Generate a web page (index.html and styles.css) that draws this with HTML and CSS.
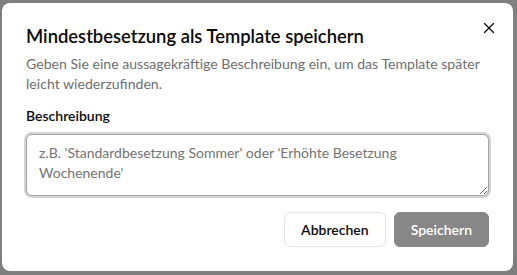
FILE: index.html
```html
<!DOCTYPE html>
<html lang="de">
<head>
    <meta charset="UTF-8">
    <meta name="viewport" content="width=device-width, initial-scale=1.0">
    <title>Template speichern</title>
    <link rel="stylesheet" href="styles.css">
</head>
<body>
    <div class="backdrop">
        <div class="dialog" role="dialog">
            <button class="close-btn" aria-label="Schließen">
                <svg width="16" height="16" viewBox="0 0 16 16" fill="none" stroke="#111" stroke-width="1.4" stroke-linecap="round">
                    <path d="M3.5 3.5l9 9M12.5 3.5l-9 9"/>
                </svg>
            </button>

            <div class="dialog-header">
                <h2>Mindestbesetzung als Template speichern</h2>
                <p>Geben Sie eine aussagekräftige Beschreibung ein, um das Template später leicht wiederzufinden.</p>
            </div>

            <form class="dialog-form">
                <label for="beschreibung">Beschreibung</label>
                <textarea id="beschreibung" rows="2" autofocus placeholder="z.B. 'Standardbesetzung Sommer' oder 'Erhöhte Besetzung Wochenende'"></textarea>

                <div class="dialog-footer">
                    <button type="button" class="btn btn-outline">Abbrechen</button>
                    <button type="submit" class="btn btn-primary" disabled>Speichern</button>
                </div>
            </form>
        </div>
    </div>
</body>
</html>
```

FILE: styles.css
```css
* {
    box-sizing: border-box;
}

body {
    margin: 0;
    font-family: Lato, "Noto Sans", sans-serif;
    background-color: #7f7f7f;
}

.backdrop {
    padding: 3px 4px 4px 2px;
}

.dialog {
    position: relative;
    background-color: #fff;
    border-radius: 8px;
    padding: 19px 24px 24px 24px;
    height: 268px;
}

.close-btn {
    position: absolute;
    top: 17px;
    right: 16px;
    width: 16px;
    height: 16px;
    padding: 0;
    border: none;
    background: none;
    display: flex;
}

.dialog-header h2 {
    margin: 0;
    font-size: 18.4px;
    line-height: 28px;
    font-weight: 600;
    color: #0a0a0a;
}

.dialog-header p {
    margin: 4px 0 0 0;
    font-size: 14.1px;
    line-height: 20px;
    color: #6e6e6e;
}

.dialog-form {
    display: flex;
    flex-direction: column;
    margin-top: 12px;
}

.dialog-form label {
    font-size: 14px;
    line-height: 20px;
    font-weight: 600;
    color: #0a0a0a;
    margin-bottom: 8px;
}

.dialog-form textarea {
    font-family: inherit;
    font-size: 14px;
    line-height: 20px;
    height: 62px;
    padding: 8px 12px;
    border: 1px solid #a3a3a3;
    border-radius: 6px;
    box-shadow: 0 0 0 2px #d4d4d4;
    outline: none;
    color: #0a0a0a;
    resize: vertical;
}

.dialog-form textarea::placeholder {
    color: #737373;
}

.dialog-footer {
    display: flex;
    justify-content: flex-end;
    gap: 8px;
    margin-top: 16px;
}

.btn {
    font-family: inherit;
    font-size: 14px;
    font-weight: 600;
    height: 35px;
    padding: 0 16px;
    border-radius: 6px;
}

.btn-outline {
    background-color: #fff;
    border: 1px solid #e5e5e5;
    color: #0a0a0a;
}

.btn-primary {
    background-color: #878787;
    border: 1px solid #878787;
    color: #fff;
}
```
